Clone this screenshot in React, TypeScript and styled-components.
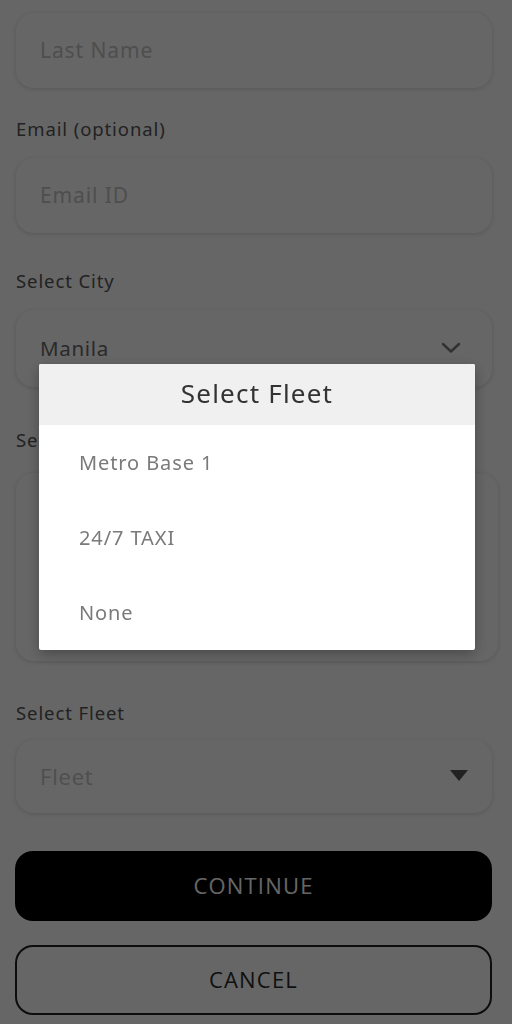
import React from "react";
import styled, { createGlobalStyle } from "styled-components";

const Global = createGlobalStyle`
  html, body { margin: 0; padding: 0; background: #ffffff; }
  body { font-family: "Noto Sans", "Open Sans", sans-serif; }
  * { box-sizing: border-box; }
`;

const Page = styled.div`
  width: 512px;
  height: 1024px;
  overflow: hidden;
  background: #ffffff;
  padding: 13px 20px 0 16px;
  display: flex;
  flex-direction: column;
`;

const Group = styled.div<{ $mt?: number }>`
  display: flex;
  flex-direction: column;
  margin-top: ${(p) => p.$mt ?? 0}px;
`;

const Label = styled.div<{ $mb?: number }>`
  font-family: "Noto Sans", sans-serif;
  font-size: 18.5px;
  line-height: 22px;
  color: #555555;
  letter-spacing: 0.9px;
  padding-bottom: 2px;
  margin-bottom: ${(p) => p.$mb ?? 16}px;
`;

const Field = styled.div<{ $h?: number; $wide?: boolean; $pr?: number }>`
  height: ${(p) => p.$h ?? 75}px;
  margin-right: ${(p) => (p.$wide ? -6 : 0)}px;
  border-radius: 18px;
  background: #ffffff;
  box-shadow: 0 1px 5px rgba(0, 0, 0, 0.16);
  display: flex;
  align-items: center;
  justify-content: space-between;
  padding: 0 ${(p) => p.$pr ?? 30}px 2px 24px;
`;

const Placeholder = styled.span<{ $open?: boolean }>`
  font-family: ${(p) => (p.$open ? '"Open Sans", sans-serif' : '"Noto Sans", sans-serif')};
  font-size: ${(p) => (p.$open ? 22 : 21)}px;
  color: #c4c4c4;
  letter-spacing: ${(p) => (p.$open ? 0.8 : 0.9)}px;
`;

const Value = styled.span`
  font-family: "Noto Sans", sans-serif;
  font-size: 20.5px;
  color: #6a6a6a;
  letter-spacing: 0.7px;
`;

const Button = styled.div<{ $primary?: boolean }>`
  height: 70px;
  border-radius: 18px;
  display: flex;
  align-items: center;
  justify-content: center;
  padding-bottom: 2px;
  font-family: "Open Sans", sans-serif;
  font-size: 22px;
  letter-spacing: 1.2px;
  background: ${(p) => (p.$primary ? "#000000" : "#ffffff")};
  color: ${(p) => (p.$primary ? "#ffffff" : "#2a2a2a")};
  border: ${(p) => (p.$primary ? "none" : "2px solid #222222")};
  margin-left: -1px;
`;

const Backdrop = styled.div`
  position: fixed;
  inset: 0;
  background: rgba(0, 0, 0, 0.6);
`;

const Dialog = styled.div`
  position: fixed;
  left: 39px;
  top: 364px;
  width: 436px;
  background: #ffffff;
  border-radius: 2px;
  overflow: hidden;
  box-shadow: 0 4px 14px rgba(0, 0, 0, 0.3);
  display: flex;
  flex-direction: column;
`;

const DialogHeader = styled.div`
  height: 61px;
  background: #f0f0f0;
  display: flex;
  align-items: center;
  justify-content: center;
  padding-bottom: 3px;
  font-family: "Noto Sans", sans-serif;
  font-size: 26px;
  color: #333333;
  letter-spacing: 1.2px;
`;

const Option = styled.div`
  height: 75px;
  display: flex;
  align-items: center;
  padding-left: 40px;
  font-family: "Noto Sans", sans-serif;
  font-size: 20px;
  color: #7a7a7a;
  letter-spacing: 0.9px;
`;

const Chevron = () => (
  <svg width="20" height="12" viewBox="0 0 20 12" fill="none">
    <path d="M2 2 L10 9.5 L18 2" stroke="#7a7a7a" strokeWidth="2.4" strokeLinecap="round" strokeLinejoin="round" />
  </svg>
);

const Caret = () => (
  <svg width="18" height="11" viewBox="0 0 18 11">
    <path d="M0 0 H18 L9 11 Z" fill="#555555" />
  </svg>
);

export default function App() {
  return (
    <>
      <Global />
      <Page>
        <Field>
          <Placeholder>Last Name</Placeholder>
        </Field>
        <Group $mt={30}>
          <Label>Email (optional)</Label>
          <Field>
            <Placeholder>Email ID</Placeholder>
          </Field>
        </Group>
        <Group $mt={37}>
          <Label>Select City</Label>
          <Field $h={77} $pr={31}>
            <Value>Manila</Value>
            <Chevron />
          </Field>
        </Group>
        <Group $mt={42}>
          <Label $mb={20}>Select Vehicle Type</Label>
          <Field $h={188} $wide />
        </Group>
        <Group $mt={41}>
          <Label $mb={14}>Select Fleet</Label>
          <Field $h={73} $pr={24}>
            <Placeholder $open>Fleet</Placeholder>
            <Caret />
          </Field>
        </Group>
        <Group $mt={38}>
          <Button $primary>CONTINUE</Button>
        </Group>
        <Group $mt={24}>
          <Button>CANCEL</Button>
        </Group>
      </Page>
      <Backdrop />
      <Dialog>
        <DialogHeader>Select Fleet</DialogHeader>
        <Option>Metro Base 1</Option>
        <Option>24/7 TAXI</Option>
        <Option>None</Option>
      </Dialog>
    </>
  );
}
